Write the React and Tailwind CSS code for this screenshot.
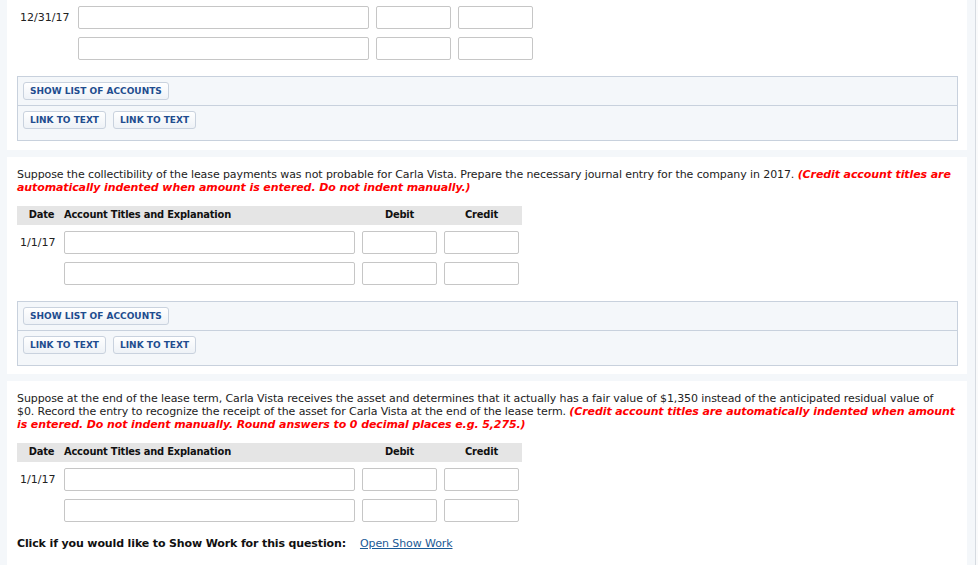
import React from 'react';

const font = { fontFamily: '"DejaVu Sans", Verdana, sans-serif' };
const condensed = { fontFamily: '"DejaVu Sans Condensed", "DejaVu Sans", sans-serif' };

const Btn = ({ children }) => (
    <button className="h-[18px] px-[6px] rounded-[3px] border border-[#c9d2de] bg-gradient-to-b from-white to-[#eef2f7] text-[9px] font-bold leading-none text-[#1f4d8f]">
        {children}
    </button>
);

const AccountsBox = () => (
    <div className="border border-[#c8d1dd] bg-[#f4f7fa]">
        <div className="flex px-[5px] pt-[5px] pb-[5px] border-b border-[#c8d1dd]">
            <Btn>SHOW LIST OF ACCOUNTS</Btn>
        </div>
        <div className="flex gap-[7px] px-[5px] pt-[5px] pb-[11px]">
            <Btn>LINK TO TEXT</Btn>
            <Btn>LINK TO TEXT</Btn>
        </div>
    </div>
);

const Field = ({ w }) => (
    <div className={`${w} h-[23px] rounded-[2px] border border-[#c6c6c6] bg-white`} />
);

const Row = ({ date, dateW }) => (
    <div className="flex items-start">
        <div className={`${dateW} pl-[3px] pt-[5px] text-[11px] leading-[13px] text-[#222]`}>{date}</div>
        <div className="flex gap-[7px]">
            <Field w="w-[291px]" />
            <Field w="w-[75px]" />
            <Field w="w-[75px]" />
        </div>
    </div>
);

const Header = () => (
    <div className="flex items-center h-[19px] w-[505px] bg-[#e5e5e5] text-[11px] font-bold tracking-[-0.2px] text-[#111]" style={condensed}>
        <div className="w-[47px] text-center pl-[2px]">Date</div>
        <div className="w-[291px]">Account Titles and Explanation</div>
        <div className="w-[82px] text-center pl-[7px]">Debit</div>
        <div className="w-[82px] text-center pl-[7px]">Credit</div>
    </div>
);

const Red = ({ children }) => (
    <span className="font-bold italic text-[#ff0000]">{children}</span>
);

export default function App() {
    return (
        <div className="flex h-[565px] overflow-hidden bg-[#f4f7fa]" style={font}>
            <div className="w-[975px] pl-[7px] pr-[8px] flex flex-col gap-[7px] shrink-0">
                {/* Part 1 (top cut off) */}
                <section className="bg-white pl-[10px] pr-[9px] pt-[6px] pb-[9px]">
                    <div className="flex flex-col gap-[8px]">
                        <Row date="12/31/17" dateW="w-[61px]" />
                        <Row date="" dateW="w-[61px]" />
                    </div>
                    <div className="mt-[16px]">
                        <AccountsBox />
                    </div>
                </section>

                {/* Part 2 */}
                <section className="bg-white pl-[10px] pr-[9px] pt-[11px] pb-[8px]">
                    <p className="whitespace-nowrap text-[11px] leading-[13px] tracking-[-0.1px] text-[#222]">
                        Suppose the collectibility of the lease payments was not probable for Carla Vista. Prepare the necessary journal entry for the company in 2017. <Red>(Credit account titles are<br />automatically indented when amount is entered. Do not indent manually.)</Red>
                    </p>
                    <div className="mt-[12px]">
                        <Header />
                    </div>
                    <div className="mt-[6px] flex flex-col gap-[8px]">
                        <Row date="1/1/17" dateW="w-[47px]" />
                        <Row date="" dateW="w-[47px]" />
                    </div>
                    <div className="mt-[16px]">
                        <AccountsBox />
                    </div>
                </section>

                {/* Part 3 */}
                <section className="flex-1 bg-white pl-[10px] pr-[9px] pt-[11px]">
                    <p className="whitespace-nowrap text-[11px] leading-[13px] tracking-[-0.1px] text-[#222]">
                        Suppose at the end of the lease term, Carla Vista receives the asset and determines that it actually has a fair value of $1,350 instead of the anticipated residual value of<br />$0. Record the entry to recognize the receipt of the asset for Carla Vista at the end of the lease term. <Red>(Credit account titles are automatically indented when amount<br />is entered. Do not indent manually. Round answers to 0 decimal places e.g. 5,275.)</Red>
                    </p>
                    <div className="mt-[12px]">
                        <Header />
                    </div>
                    <div className="mt-[6px] flex flex-col gap-[8px]">
                        <Row date="1/1/17" dateW="w-[47px]" />
                        <Row date="" dateW="w-[47px]" />
                    </div>
                    <div className="mt-[15px] flex items-center text-[11px] leading-[13px]">
                        <span className="font-bold tracking-[-0.13px] text-[#111]">Click if you would like to Show Work for this question:</span>
                        <a href="#" className="ml-[14px] tracking-[-0.1px] text-[#1a5a96] underline">Open Show Work</a>
                    </div>
                </section>
            </div>
            <div className="w-px bg-[#d6dbe1] shrink-0" />
            <div className="flex-1 bg-[#f9fafb]" />
        </div>
    );
}
